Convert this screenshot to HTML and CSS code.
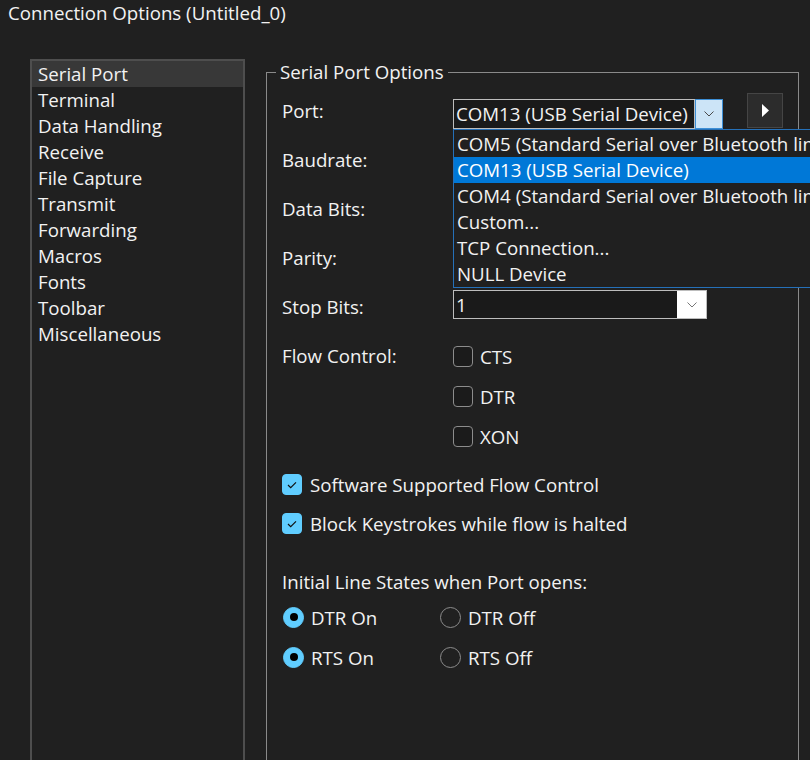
FILE: index.html
```html
<!DOCTYPE html>
<html>
<head>
<meta charset="utf-8">
<title>Connection Options</title>
<link rel="stylesheet" href="styles.css">
</head>
<body>
<div class="window">
  <div class="title">Connection Options (Untitled_0)</div>
  <div class="main">
    <ul class="nav">
      <li class="sel">Serial Port</li>
      <li>Terminal</li>
      <li>Data Handling</li>
      <li>Receive</li>
      <li>File Capture</li>
      <li>Transmit</li>
      <li>Forwarding</li>
      <li>Macros</li>
      <li>Fonts</li>
      <li>Toolbar</li>
      <li>Miscellaneous</li>
    </ul>
    <fieldset class="group">
      <legend>Serial Port Options</legend>
      <div class="row">
        <span class="lbl">Port:</span>
        <div class="port-ctl">
          <div class="combo port">
            <span class="field">COM13 (USB Serial Device)</span>
            <span class="arrow"><svg width="10" height="6" viewBox="0 0 10 6"><polyline points="0.5,0.5 5,5 9.5,0.5" fill="none" stroke="#4a4a4a" stroke-width="1"/></svg></span>
          </div>
          <button class="go"><svg width="7" height="13" viewBox="0 0 7 13"><polygon points="0,0 7,6.5 0,13" fill="#ffffff"/></svg></button>
          <ul class="dropdown">
            <li>COM5 (Standard Serial over Bluetooth link)</li>
            <li class="sel">COM13 (USB Serial Device)</li>
            <li>COM4 (Standard Serial over Bluetooth link)</li>
            <li>Custom...</li>
            <li>TCP Connection...</li>
            <li>NULL Device</li>
          </ul>
        </div>
      </div>
      <div class="row"><span class="lbl">Baudrate:</span></div>
      <div class="row"><span class="lbl">Data Bits:</span></div>
      <div class="row"><span class="lbl">Parity:</span></div>
      <div class="row">
        <span class="lbl">Stop Bits:</span>
        <div class="combo stop">
          <span class="field">1</span>
          <span class="arrow"><svg width="10" height="6" viewBox="0 0 10 6"><polyline points="0.5,0.5 5,5 9.5,0.5" fill="none" stroke="#777" stroke-width="1"/></svg></span>
        </div>
      </div>
      <div class="row flow">
        <span class="lbl">Flow Control:</span>
        <div class="checks">
          <label class="chk"><span class="box"></span>CTS</label>
          <label class="chk"><span class="box"></span>DTR</label>
          <label class="chk"><span class="box"></span>XON</label>
        </div>
      </div>
      <div class="opts">
        <label class="chk wide"><span class="box on"><svg width="10" height="8" viewBox="0 0 10 8"><polyline points="1,4 3.7,6.6 9,1.3" fill="none" stroke="#111" stroke-width="1.2"/></svg></span>Software Supported Flow Control</label>
        <label class="chk wide"><span class="box on"><svg width="10" height="8" viewBox="0 0 10 8"><polyline points="1,4 3.7,6.6 9,1.3" fill="none" stroke="#111" stroke-width="1.2"/></svg></span>Block Keystrokes while flow is halted</label>
      </div>
      <div class="heading">Initial Line States when Port opens:</div>
      <div class="radios">
        <label class="rad"><span class="dot on"></span>DTR On</label>
        <label class="rad"><span class="dot"></span>DTR Off</label>
        <label class="rad"><span class="dot on"></span>RTS On</label>
        <label class="rad"><span class="dot"></span>RTS Off</label>
      </div>
    </fieldset>
  </div>
</div>
</body>
</html>
```

FILE: styles.css
```css
html, body {
  margin: 0;
  padding: 0;
  overflow: hidden;
  background: #202020;
}
body {
  font-family: "Open Sans", "Noto Sans", sans-serif;
  font-size: 18.7px;
  color: #f2f2f2;
  width: 810px;
  height: 760px;
}
.window {
  display: flex;
  flex-direction: column;
}
.title {
  height: 26px;
  line-height: 26px;
  padding-left: 8px;
  white-space: nowrap;
}
.main {
  display: flex;
  align-items: flex-start;
  margin-top: 33px;
  padding-left: 30px;
  gap: 21px;
}
.nav {
  list-style: none;
  margin: 0;
  padding: 0;
  width: 211px;
  height: 720px;
  border: 2px solid #4e4e4e;
  background: #202020;
}
.nav li {
  height: 26px;
  line-height: 26px;
  padding-left: 6px;
  white-space: nowrap;
}
.nav li.sel {
  background: #383838;
}
.group {
  margin: 0;
  padding: 1px 0 0 15px;
  width: 516px;
  min-height: 700px;
  border: 1px solid #8a8a8a;
  min-inline-size: 0;
}
.group legend {
  padding: 0 4px;
  margin-left: -6px;
  line-height: 26px;
  white-space: nowrap;
}
.row {
  display: flex;
  align-items: flex-start;
  height: 49px;
}
.lbl {
  width: 171px;
  flex: none;
  padding-top: 12px;
  line-height: 26px;
  white-space: nowrap;
}
.port-ctl {
  position: relative;
  display: flex;
  align-items: flex-start;
  gap: 24px;
}
.combo {
  display: flex;
  height: 30px;
  box-sizing: border-box;
}
.combo .field {
  flex: 1;
  box-sizing: border-box;
  border: 1px solid #bdbdbd;
  background: #1a1a1a;
  line-height: 28px;
  padding-left: 2px;
  white-space: nowrap;
  overflow: hidden;
}
.combo .arrow {
  display: flex;
  align-items: center;
  justify-content: center;
  box-sizing: border-box;
}
.combo.port {
  margin-top: 13px;
  width: 270px;
}
.combo.port .arrow {
  width: 28px;
  background: #cce4f7;
  border: 1px solid #3d8fd6;
}
.combo.stop {
  margin-top: 8px;
  width: 254px;
  height: 29px;
}
.combo.stop .field {
  line-height: 27px;
  border-right: none;
}
.combo.stop .arrow {
  width: 30px;
  background: #ffffff;
  border: 1px solid #bdbdbd;
  border-left: none;
}
.go {
  margin-top: 7px;
  width: 36px;
  height: 35px;
  padding: 0;
  border: 1px solid #454545;
  background: #2c2c2c;
  display: flex;
  align-items: center;
  justify-content: center;
}
.dropdown {
  position: absolute;
  top: 43px;
  left: 0;
  width: 400px;
  margin: 0;
  padding: 1px 0 0;
  list-style: none;
  border: 1px solid #2570b8;
  background: #202020;
  z-index: 2;
}
.dropdown li {
  height: 26px;
  line-height: 26px;
  padding-left: 3px;
  white-space: nowrap;
}
.dropdown li.sel {
  background: #0078d7;
  color: #ffffff;
}
.row.flow {
  height: auto;
}
.checks {
  display: flex;
  flex-direction: column;
  margin-top: 5px;
}
.chk {
  display: flex;
  align-items: center;
  gap: 7px;
  height: 40px;
  white-space: nowrap;
}
.box {
  width: 20px;
  height: 21px;
  box-sizing: border-box;
  border: 1px solid #8c8c8c;
  border-radius: 4px;
  background: #1b1b1b;
  display: flex;
  align-items: center;
  justify-content: center;
}
.box.on {
  background: #60cdff;
  border-color: #60cdff;
}
.opts {
  margin-top: 9px;
  display: flex;
  flex-direction: column;
}
.chk.wide {
  height: 39px;
  gap: 8px;
}
.heading {
  margin-top: 26px;
  line-height: 26px;
  white-space: nowrap;
}
.radios {
  margin-top: 2px;
  display: grid;
  grid-template-columns: 157px 157px;
  grid-auto-rows: 40px;
}
.rad {
  display: flex;
  align-items: center;
  gap: 7px;
  padding-left: 1px;
  white-space: nowrap;
}
.dot {
  width: 21px;
  height: 21px;
  box-sizing: border-box;
  border-radius: 50%;
  border: 1.5px solid #8c8c8c;
  display: flex;
  align-items: center;
  justify-content: center;
}
.dot.on {
  background: #60cdff;
  border-color: #60cdff;
}
.dot.on::after {
  content: "";
  width: 8px;
  height: 8px;
  border-radius: 50%;
  background: #000;
}
```
